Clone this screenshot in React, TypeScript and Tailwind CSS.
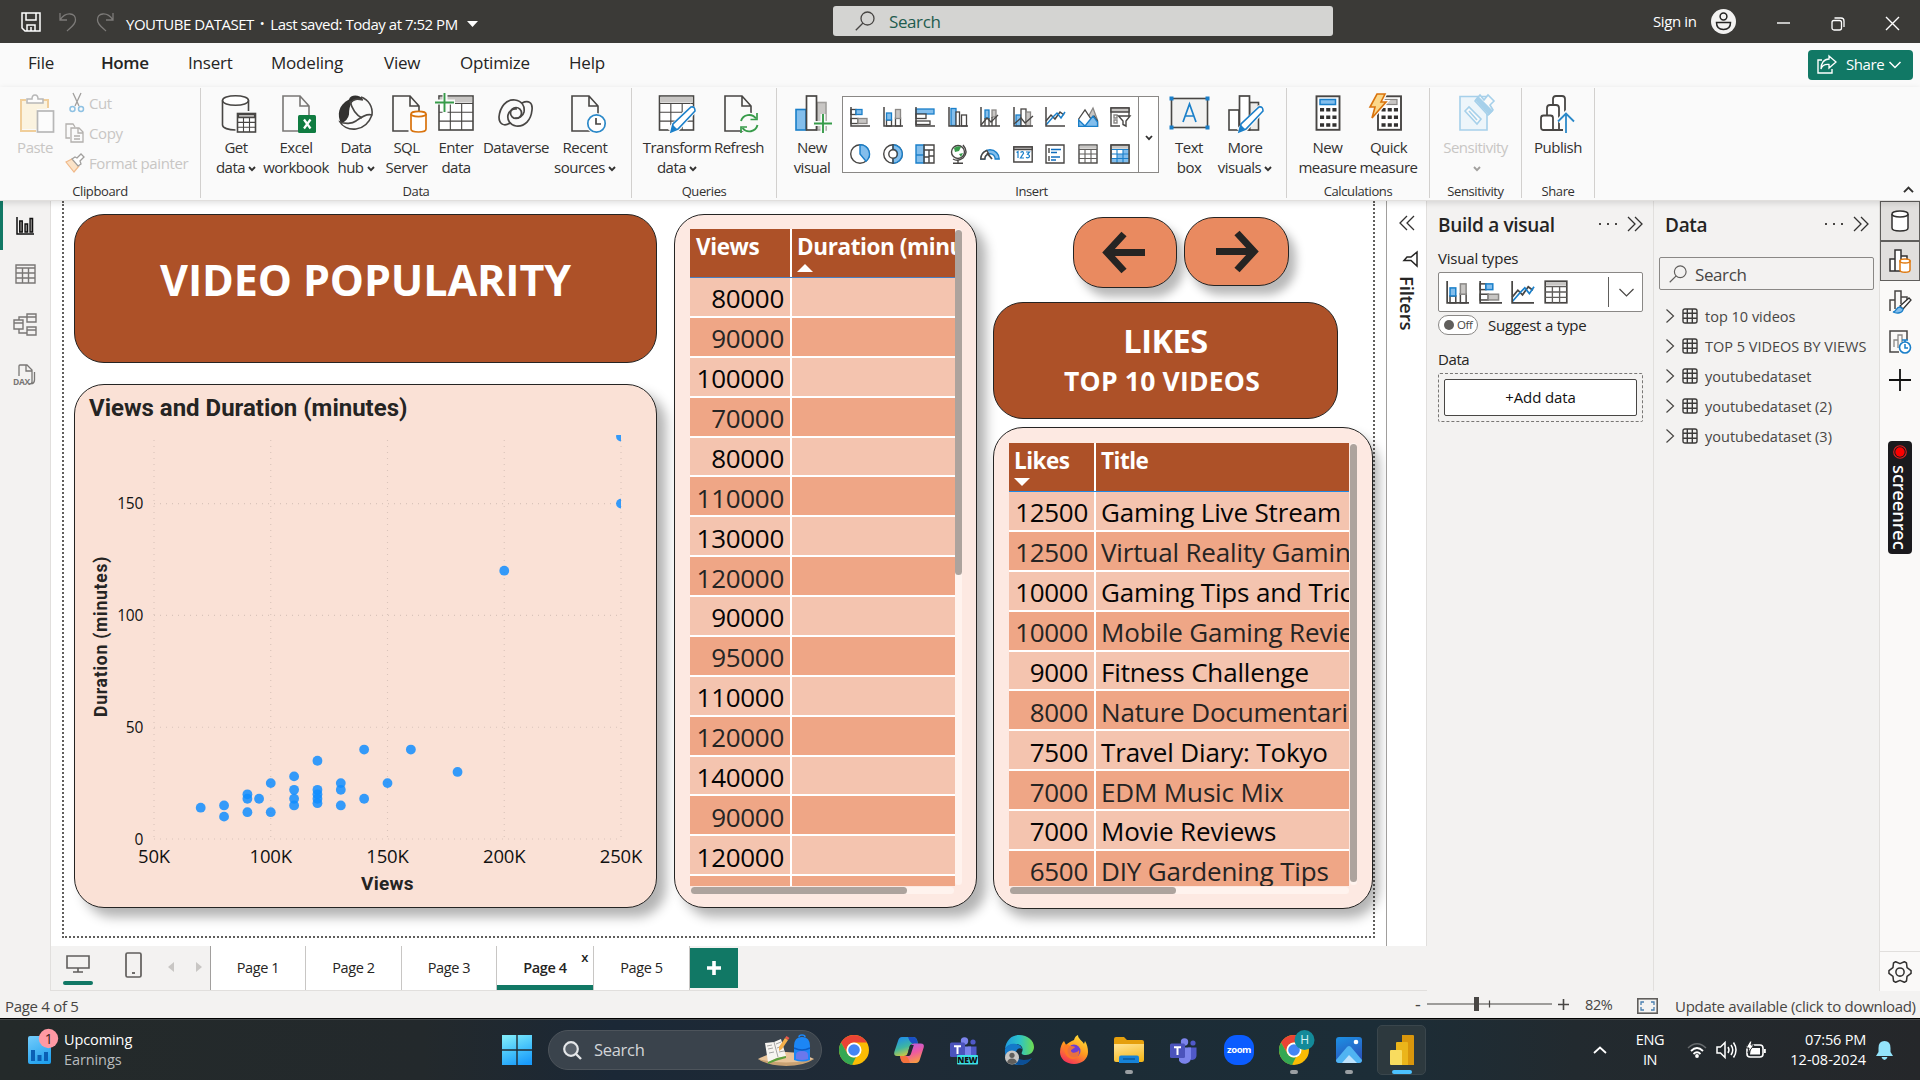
import React from "react";

const DK = "#484644";
const BL = "#1a7fc9";
const LB = "#83beec";
const GY = "#c8c6c4";

type SvgProps = { w: number; h: number; vb?: string; children: React.ReactNode; className?: string };
function Svg({ w, h, vb, children, className = "" }: SvgProps) {
  return (
    <svg width={w} height={h} viewBox={vb ?? `0 0 ${w} ${h}`} fill="none" className={`block shrink-0 overflow-visible ${className}`}>
      {children}
    </svg>
  );
}

/* ---------- ribbon icons, drawn on a 40 x 40 grid ---------- */
const Grid = ({ x, y, w, h, c = DK, head = GY }: { x: number; y: number; w: number; h: number; c?: string; head?: string }) => (
  <g>
    <rect x={x} y={y} width={w} height={h} fill="#fff" stroke={c} strokeWidth="1.6" />
    <rect x={x + 0.8} y={y + 0.8} width={w - 1.6} height={h * 0.17} fill={head} />
    <path
      d={`M${x} ${y + h * 0.22}H${x + w}M${x} ${y + h * 0.48}H${x + w}M${x} ${y + h * 0.74}H${x + w}M${x + w / 3} ${y + h * 0.22}V${y + h}M${x + (2 * w) / 3} ${y + h * 0.22}V${y + h}`}
      stroke={c}
      strokeWidth="1.1"
    />
  </g>
);
const Doc = ({ x, y, c = DK }: { x: number; y: number; c?: string }) => (
  <path d={`M${x} ${y}h17l9 10v25h-26zM${x + 17} ${y}v10h9`} fill="#fafafa" stroke={c} strokeWidth="1.6" />
);

const icons: Record<string, React.ReactNode> = {
  paste: (
    <g opacity=".5">
      <path d="M11 6H6v31h15M28 6h5v8" stroke="#e8a33d" strokeWidth="2" />
      <path d="M7 7h25v8H22v20H7z" fill="#fdeec6" />
      <path d="M12 9V5h5q0-4 3-4t3 4h5v4z" fill="#fff" stroke="#777" strokeWidth="1.5" />
      <rect x="22.500" y="17" width="16" height="21" fill="#fff" stroke="#777" strokeWidth="1.7" />
    </g>
  ),
  getdata: (
    <g stroke={DK} strokeWidth="1.6">
      <ellipse cx="19.500" cy="6.500" rx="13" ry="4.800" fill="#fff" />
      <path d="M6.500 6.500V31c0 3 6 5 13 5M32.500 6.500V17" />
      <Grid x={21.5} y={19.500} w={18} h={18.500} />
    </g>
  ),
  excel: (
    <g>
      <Doc x={7} y={2} c="#797775" />
      <rect x="22" y="21" width="18" height="18" rx="1.500" fill="#107c41" />
      <path d="M28 25.500l6.500 9M34.500 25.500L28 34.500" stroke="#fff" strokeWidth="2.200" />
    </g>
  ),
  hub: (
    <g stroke={DK} strokeWidth="1.600">
      <path d="M13 5.500C14 0 24 0 27 5.500q-8-1-11 3-3 4-3 12-1 6-8 9C1 21 2 11 13 5.500z" fill="#323130" stroke="none" />
      <path d="M25 3c8 3 12 10 11 18-3 8-8 13-16 14C12 36 6 32 4 28c5 2 12 2 16-1s10-8 16-6" />
      <path d="M14 7c2 8 6 14 12 17M15 8c4-4 8-3 12-2" />
    </g>
  ),
  sql: (
    <g>
      <Doc x={6} y={2} />
      <rect x="21.500" y="17" width="20" height="23" fill="#fafafa" />
      <path d="M24 20v15c0 2 3.500 3 7.500 3s7.500-1 7.500-3V20" fill="#fff" stroke="#d9730d" strokeWidth="1.700" />
      <ellipse cx="31.500" cy="20" rx="7.500" ry="2.600" fill="#fff" stroke="#d9730d" strokeWidth="1.700" />
    </g>
  ),
  enter: (
    <g>
      <Grid x={3} y={2} w={34} h={34} />
      <path d="M-1 8h20M9-1v20" stroke="#fafafa" strokeWidth="5" />
      <path d="M-1 8.500h19M8.500-1v19" stroke="#379b4a" strokeWidth="1.900" />
    </g>
  ),
  dataverse: (
    <g stroke={DK} strokeWidth="1.700">
      <path d="M26 9c6-3 11-1 10 7-1 10-7 17-16 16-6-1-9-6-8-11 1-4 5-7 9-6" />
      <path d="M14 29c-6 4-11 1-11-6C4 13 10 5 19 6c7 1 10 6 9 12-1 4-5 7-9 6" />
      <circle cx="20" cy="19" r="5.500" />
    </g>
  ),
  recent: (
    <g>
      <Doc x={7} y={2} />
      <circle cx="31.500" cy="29.500" r="10.500" fill="#fafafa" />
      <circle cx="31.500" cy="29.500" r="8.700" fill="#fff" stroke="#2b88c8" strokeWidth="1.700" />
      <path d="M31 24v6h5" stroke={DK} strokeWidth="1.700" />
    </g>
  ),
  transform: (
    <g>
      <Grid x={2.5} y={2} w={34} h={34} />
      <path d="M14 38L37 13" stroke="#fafafa" strokeWidth="10" />
      <path d="M14 38l2-8L34 13q4-1 4 4L21 35z" fill="#fff" stroke={BL} strokeWidth="1.600" />
      <path d="M14 38l2-7 4 4z" fill={BL} />
    </g>
  ),
  refresh: (
    <g>
      <Doc x={6} y={2} />
      <circle cx="30" cy="29" r="10.500" fill="#fafafa" />
      <path d="M22 27a8.500 8.500 0 0 1 15-2.500M38.500 31a8.500 8.500 0 0 1-15 3" stroke="#379b4a" strokeWidth="1.900" />
      <path d="M38 19v6.500h-6.500M22 39v-6h6" stroke="#379b4a" strokeWidth="1.700" />
    </g>
  ),
  newvisual: (
    <g>
      <rect x="4" y="15.500" width="10" height="20.500" fill={LB} stroke={BL} strokeWidth="1.600" />
      <rect x="25" y="8.500" width="9" height="27.500" fill={GY} stroke="#a19f9d" strokeWidth="1.600" />
      <rect x="14.500" y="2" width="10" height="34" fill="#fff" stroke={DK} strokeWidth="1.700" />
      <path d="M21 29.500h19M31 20v19" stroke="#fafafa" strokeWidth="5" />
      <path d="M22 29.500h18M31 20v19" stroke="#379b4a" strokeWidth="1.900" />
    </g>
  ),
  textbox: (
    <g>
      <rect x="2.500" y="4.500" width="36" height="29" fill="#f3f2f1" stroke={DK} strokeWidth="1.600" />
      <path d="M14 28l6.500-18L27 28M16.200 22h8.600" stroke={BL} strokeWidth="1.700" />
      <path d="M.5 2.500h4v4h-4zM36.500 2.500h4v4h-4zM.5 31.500h4v4h-4zM36.500 31.500h4v4h-4z" fill={BL} />
    </g>
  ),
  morevisuals: (
    <g>
      <rect x="4" y="16" width="10" height="20" fill="#fff" stroke={DK} strokeWidth="1.600" />
      <rect x="24.500" y="8.500" width="9" height="27.500" fill="#edebe9" stroke={DK} strokeWidth="1.600" />
      <rect x="14.500" y="2" width="10" height="34" fill="#fff" stroke={DK} strokeWidth="1.700" />
      <path d="M15 38L37 14" stroke="#fafafa" strokeWidth="9" />
      <path d="M14 38l2-8L34 13q4-1 4 4L21 35z" fill="#fff" stroke={BL} strokeWidth="1.600" />
      <path d="M14 38l2-7 4 4z" fill={BL} />
    </g>
  ),
  newmeasure: (
    <g>
      <rect x="8.500" y="2.300" width="23" height="33.500" fill="#fff" stroke={DK} strokeWidth="1.900" />
      <rect x="12" y="5.500" width="15.500" height="5" fill={LB} stroke={BL} strokeWidth="1.500" />
      <path d="M12 15.800h16.500M12 23.300h16.500M12 31h16.500" stroke="#323130" strokeWidth="3.600" strokeDasharray="4.100 2.100" />
    </g>
  ),
  quick: (
    <g>
      <rect x="9" y="2.300" width="23" height="33.500" fill="#fff" stroke={DK} strokeWidth="1.900" />
      <rect x="16" y="5.500" width="12" height="5" fill={GY} stroke="#8a8886" strokeWidth="1.200" />
      <path d="M12.500 15.800H29M12.500 23.300H29M12.500 31H29" stroke="#323130" strokeWidth="3.600" strokeDasharray="4.100 2.100" />
      <path d="M8 0h8l-4 8h5L3 24l3-11H0z" fill="#fcd88a" stroke="#fafafa" strokeWidth="4" />
      <path d="M8 0h8l-4 8h5L3 24l3-11H1z" fill="#fcd88a" stroke="#d9730d" strokeWidth="1.600" />
    </g>
  ),
  sensitivity: (
    <g stroke="#a6d0ea" strokeWidth="1.600">
      <path d="M4 2.500h27V36H4z" fill="#edf5fa" />
      <path d="M9 17l4-4 12 12-4 5z" fill="#fafafa" />
      <path d="M13 17l8 9" />
      <path d="M19 7l5-6 4 5 4-5 6 6-4 4 3 5-5 5z" fill="#fafafa" />
      <path d="M20 6l13 14 3-3L22 3z" fill="#a6d0ea" />
    </g>
  ),
  publish: (
    <g stroke={DK} strokeWidth="1.800">
      <path d="M15 12V5q0-3 3-3h6q3 0 3 3v13" fill="#fff" />
      <path d="M9 22v-8q0-3 3-3h6q3 0 3 3v22" fill="#fff" />
      <path d="M3 33V24q0-2.500 2.500-2.500h7Q15 21.500 15 24v12H5q-2 0-2-3zM15 36h10" fill="#fff" />
      <path d="M28 39V20M20 27.500l8-8 8 8" stroke="#fafafa" strokeWidth="5" />
      <path d="M28 39V20M20 27.500l8-8 8 8" stroke="#2b88c8" />
    </g>
  ),
};

const Caret = ({ c = "#323130" }: { c?: string }) => (
  <svg width="8" height="6" viewBox="0 0 8 6" className="mt-[3px] ml-[3px] inline-block" fill="none">
    <path d="M1 1l3 3.200L7 1" stroke={c} strokeWidth="1.900" />
  </svg>
);

function Item({ icon, a, b, caret, w, dim }: { icon: string; a: string; b?: string; caret?: boolean; w: string; dim?: boolean }) {
  return (
    <div className={`flex shrink-0 flex-col items-center pt-[7px] ${w} ${dim ? "text-[#c8c6c4]" : "text-[#323130]"}`}>
      <Svg w={40} h={40}>{icons[icon]}</Svg>
      <div className="mt-[3px] flex flex-col items-center text-[15px] leading-5 tracking-[-0.5px] whitespace-nowrap">
        <span>{a}</span>
        <span className="flex h-5 items-center">
          {b}
          {caret && <Caret c={dim ? "#a19f9d" : "#323130"} />}
        </span>
      </div>
    </div>
  );
}

function Group({ label, w, children }: { label: string; w: string; children: React.ReactNode }) {
  return (
    <div className={`flex shrink-0 flex-col ${w}`}>
      <div className="flex h-[96px]">{children}</div>
      <div className="flex h-[18px] items-center justify-center pt-[2px] text-[13px] text-[#323130]">{label}</div>
    </div>
  );
}
const Sep = () => <div className="mt-px h-[110px] w-px shrink-0 bg-[#d2d0ce]" />;

/* ---------- small chart icons, drawn on a 20 x 20 grid ---------- */
const Ax = () => <path d="M1 0v19h19" stroke={DK} strokeWidth="1.500" />;
const mini: Record<string, React.ReactNode> = {
  sbar: (<g strokeWidth="1.300"><rect x="1" y="2.500" width="5" height="5" fill="#fff" stroke={DK} /><rect x="6" y="2.500" width="6" height="5" fill={LB} stroke={BL} /><rect x="1" y="11.500" width="7" height="5" fill="#fff" stroke={DK} /><rect x="8" y="11.500" width="9" height="5" fill={GY} stroke="#8a8886" /><Ax /></g>),
  scol: (<g strokeWidth="1.300"><rect x="3.500" y="13" width="5" height="6" fill="#fff" stroke={DK} /><rect x="3.500" y="6" width="5" height="7" fill={LB} stroke={BL} /><rect x="12.500" y="11" width="5" height="8" fill="#fff" stroke={DK} /><rect x="12.500" y="2.500" width="5" height="9" fill={GY} stroke="#8a8886" /><Ax /></g>),
  cbar: (<g strokeWidth="1.300"><rect x="1" y="2" width="18" height="5" fill={LB} stroke={BL} /><rect x="1" y="7" width="10" height="4.500" fill="#fff" stroke={DK} /><rect x="1" y="14" width="14" height="3.500" fill="#fff" stroke={DK} /><Ax /></g>),
  ccol: (<g strokeWidth="1.300"><rect x="3" y="1.500" width="5" height="17" fill={LB} stroke={BL} /><rect x="8" y="5" width="3.500" height="14" fill="#fff" stroke={DK} /><rect x="13.500" y="8" width="5" height="11" fill="#fff" stroke={DK} /><Ax /></g>),
  linescol: (<g strokeWidth="1.300"><rect x="5" y="3" width="4" height="8" fill={LB} stroke={BL} /><rect x="12" y="3" width="4" height="7" fill={GY} stroke="#8a8886" /><path d="M5 11v8M9 11v8M12 10v9M16 10v9" stroke={DK} /><path d="M1 18l6-7 4 4 7-7" stroke={DK} /><Ax /></g>),
  linecol: (<g strokeWidth="1.300"><rect x="3" y="8" width="5" height="11" fill={LB} stroke={BL} /><rect x="8" y="2" width="5" height="17" fill="#fff" stroke={DK} /><rect x="13" y="5" width="4.500" height="14" fill={GY} stroke="#8a8886" /><path d="M1 17l7-6 4 5 8-7" stroke={DK} /><Ax /></g>),
  line: (<g strokeWidth="1.500"><path d="M1 14l5-6 4 4 5-7 4 3" stroke={DK} /><path d="M1 18l7-8 4-4 4 5 4-6" stroke={BL} /><Ax /></g>),
  area: (<g strokeWidth="1.300"><path d="M8 14L15 1l4.500 12v6H8z" fill={GY} stroke="#8a8886" /><path d="M.7 12L7 3l6 9 3-3 3.500 5v5.300H.7z" fill="#fff" stroke={DK} /><path d="M.7 19.300V13L7 19l4-5 4-5 4.500 6v4.300z" fill={LB} stroke={BL} /></g>),
  slicer: (<g strokeWidth="1.400"><path d="M10 19H1V1h18v8" stroke={DK} /><path d="M1 1h18v4H1z" fill={GY} stroke={DK} /><path d="M4 8h3v3H4zM4 13h3v3H4z" stroke="#8a8886" /><path d="M8.500 9H20l-4 5v5l-3-1.500V14z" fill="#fff" stroke={DK} /></g>),
  pie: (<g strokeWidth="1.400"><circle cx="10" cy="10" r="9.300" fill="#fff" stroke={DK} /><path d="M10 .7a9.300 9.300 0 0 1 6 16.500L10 10z" fill={LB} stroke={BL} /></g>),
  donut: (<g strokeWidth="1.400"><circle cx="10" cy="10" r="9.300" stroke={DK} fill="#fff" /><path d="M10 .7a9.300 9.300 0 0 1 0 18.600v-5a4.500 4.500 0 0 0 0-9z" fill={LB} stroke={BL} /><circle cx="10" cy="10" r="4.200" stroke={DK} fill="#fff" /><path d="M10 0v5M10 15v5" stroke={DK} /></g>),
  tree: (<g strokeWidth="1.400"><path d="M1 1h8v18H1z" fill={LB} stroke={BL} /><path d="M1 11h8" stroke={BL} /><path d="M9 1h10v18H9zM9 6h10M14 6v13M14 12h5M9 13h5" fill="none" stroke={DK} /></g>),
  map: (<g strokeWidth="1.400"><circle cx="10" cy="8" r="6.500" fill="#fff" stroke={DK} /><path d="M6 4q4-3 7-1l-2 4-4 1zM11 10l4-1-2 4z" fill="#379b4a" /><path d="M15 1q6 7 0 13-5 4-10 1M10 16v3M5 19.300h10" stroke={DK} /></g>),
  gauge: (<g strokeWidth="1.400"><path d="M.8 15a9.200 9.200 0 0 1 18.400 0h-4a5.200 5.200 0 0 0-10.400 0z" fill={LB} stroke={BL} /><path d="M.8 15a9.200 9.200 0 0 1 6-8.500l2 3.500a5 5 0 0 0-4 5z" fill="#fff" stroke={DK} /><path d="M7 9l5 6" stroke={DK} strokeWidth="1.800" /></g>),
  card: (<g strokeWidth="1.400"><path d="M.8 3h18.400v15H.8z" fill="#fff" stroke={DK} /><path d="M.8 3h18.400v2.500H.8z" fill={GY} stroke={DK} /><path d="M3.500 8.500L5 7.500V14M7.500 8.500q2.800-2.200 3 .8L7.500 14h3.500M13 8h3.500L14.500 10.300q3 1 1.500 3-1.500 1-3 0" stroke={BL} strokeWidth="1.200" /></g>),
  multi: (<g strokeWidth="1.400"><path d="M1 1h18v18H1z" fill="#fff" stroke={DK} /><path d="M4 4v5M4 12v5" stroke={DK} /><path d="M6 5.500h10M6 8.500h6M6 13h9M6 16h5" stroke="#0f6cbd" strokeWidth="1.700" /></g>),
  table: (<g><rect x="1" y="1" width="18" height="18" fill="#fff" stroke={DK} strokeWidth="1.400" /><rect x="1.700" y="1.700" width="16.600" height="3" fill={GY} /><path d="M1 5.500h18M1 10h18M1 14.500h18M7 5.500V19M13 5.500V19" stroke="#605e5c" strokeWidth="1.100" /></g>),
  matrix: (<g><rect x="1" y="1" width="18" height="18" fill="#fff" stroke={DK} strokeWidth="1.400" /><path d="M13 5.500h6V19H7v-4.500h6z" fill={LB} /><path d="M1 14.500h6V19H1zM7 10h6v4.500H7z" fill={LB} /><rect x="1.700" y="1.700" width="16.600" height="3" fill={GY} /><path d="M1 5.500h18M1 10h18M1 14.500h18M7 5.500V19M13 5.500V19" stroke={BL} strokeWidth="1.100" /><rect x="1" y="1" width="18" height="18" stroke={DK} strokeWidth="1.400" /></g>),
};
const Mini = ({ n, s = 20 }: { n: string; s?: number }) => (<Svg w={s} h={s} vb="0 0 20 20">{mini[n]}</Svg>);

const Magnifier = ({ s = 20, c = DK }: { s?: number; c?: string }) => (
  <Svg w={s} h={s} vb="0 0 20 20">
    <circle cx="12.500" cy="7.500" r="6.500" stroke={c} strokeWidth="1.300" />
    <path d="M8 12L.8 19.200" stroke={c} strokeWidth="1.300" />
  </Svg>
);

function TitleBar() {
  return (
    <header className="flex h-[43px] shrink-0 items-center bg-[#3b3a37] text-white">
      <div className="flex w-[126px] items-center pl-[21px]">
        <Svg w={20} h={20}>
          <path d="M1 1h18v18H4l-3-3zM5 1v7h10V1M6 19v-6h8v6M10 15v4" stroke="#fff" strokeWidth="1.500" />
        </Svg>
        <Svg w={18} h={18} className="ml-[18px]">
          <path d="M1 0v7h7M1 7C7-2 17 0 16.500 7c0 4-3 6-8.500 11" stroke="#7d7b79" strokeWidth="1.300" />
        </Svg>
        <Svg w={18} h={18} className="ml-[19px]">
          <path d="M17 0v7h-7M17 7C11-2 1 0 1.500 7c0 4 3 6 8.500 11" stroke="#7d7b79" strokeWidth="1.300" />
        </Svg>
      </div>
      <div className="flex w-[707px] items-center pt-[5px] text-[15px] tracking-[-0.48px] whitespace-nowrap">
        <span>YOUTUBE DATASET</span>
        <span className="mx-[6px] text-[13px]">•</span>
        <span>Last saved: Today at 7:52 PM</span>
        <Svg w={11} h={6} className="ml-[9px]"><path d="M0 0h11L5.500 6z" fill="#fff" /></Svg>
      </div>
      <div className="mb-px flex h-[30px] w-[500px] items-center rounded-[3px] bg-[#d4d4d2] pl-[22px]">
        <Magnifier />
        <span className="ml-[14px] pt-px text-[17px] text-[#1f5c4e]">Search</span>
      </div>
      <div className="ml-[320px] w-[58px] text-[15px] whitespace-nowrap">Sign in</div>
      <Svg w={25} h={25}>
        <circle cx="12.500" cy="12.500" r="12.500" fill="#f3f2f1" />
        <circle cx="12.500" cy="7.500" r="3.400" stroke="#252423" strokeWidth="1.500" />
        <path d="M5.500 13.500h14c0 5-3 7-7 7s-7-2-7-7z" stroke="#252423" strokeWidth="1.500" />
      </Svg>
      <Svg w={13} h={2} className="mt-[2px] ml-[41px]"><path d="M0 1h13" stroke="#fff" strokeWidth="1.400" /></Svg>
      <Svg w={14} h={14} className="mt-[4px] ml-[41px]">
        <rect x="1" y="3.500" width="9.500" height="9.500" rx="2" stroke="#fff" strokeWidth="1.300" />
        <path d="M3.500 1h6.500q3 0 3 3v6" stroke="#fff" strokeWidth="1.300" />
      </Svg>
      <Svg w={13} h={13} className="mt-[4px] ml-[41px]"><path d="M0 0l13 13M13 0L0 13" stroke="#fff" strokeWidth="1.400" /></Svg>
    </header>
  );
}

function MenuTabs() {
  return (
    <nav className="flex h-[44px] shrink-0 items-center pb-[5px] text-[17px] tracking-[-0.2px] text-[#252423]">
      <span className="ml-[28px] w-[73px]">File</span>
      <span className="w-[87px] font-semibold tracking-[-0.4px]">Home</span>
      <span className="w-[83px]">Insert</span>
      <span className="w-[113px]">Modeling</span>
      <span className="w-[76px]">View</span>
      <span className="w-[109px]">Optimize</span>
      <span className="flex-1">Help</span>
      <div className="mt-[4px] mr-[7px] flex h-[30px] w-[105px] items-center rounded-[4px] bg-[#117865] pl-[9px] text-[15px] tracking-[-0.4px] text-white">
        <Svg w={20} h={19}>
          <path d="M5 5H1v13h14v-4" stroke="#fff" strokeWidth="1.400" />
          <path d="M12 1l7 6-7 6V9.500C8 9 5 11 4 14c0-6 3-10 8-10z" stroke="#fff" strokeWidth="1.300" />
        </Svg>
        <span className="ml-[9px]">Share</span>
        <Svg w={12} h={8} className="ml-[5px]"><path d="M.5 1L6 6.500 11.500 1" stroke="#fff" strokeWidth="1.500" /></Svg>
      </div>
    </nav>
  );
}

const row1 = ["sbar", "scol", "cbar", "ccol", "linescol", "linecol", "line", "area", "slicer"];
const row2 = ["pie", "donut", "tree", "map", "gauge", "card", "multi", "table", "matrix"];

function Ribbon() {
  return (
    <div className="relative z-10 flex h-[114px] shrink-0 border-b border-[#e1dfdd] bg-[#fafafa] shadow-[0_2px_6px_rgba(0,0,0,0.13)]">
      <Group label="Clipboard" w="w-[200px]">
        <Item icon="paste" a="Paste" w="w-[70px]" dim />
        <div className="flex flex-col text-[15px] whitespace-nowrap text-[#c8c6c4]">
          <div className="mt-px -ml-px flex h-[30px] items-center">
            <Svg w={16} h={20}>
              <path d="M4 0l6 13M12 0L6 13" stroke="#a19f9d" strokeWidth="1.300" />
              <circle cx="3.500" cy="16" r="2.500" stroke="#8ec1e3" strokeWidth="1.500" /><circle cx="12" cy="16" r="2.500" stroke="#8ec1e3" strokeWidth="1.500" />
            </Svg>
            <span className="ml-[4px]">Cut</span>
          </div>
          <div className="-ml-[5px] flex h-[30px] items-center">
            <Svg w={19} h={20}>
              <path d="M5 15H1V1h7l2 3M6 5h8l4 4v10H6zM13 5v5h5M9 13h6M9 16h6" stroke="#b3b0ad" strokeWidth="1.300" />
            </Svg>
            <span className="ml-[5px]">Copy</span>
          </div>
          <div className="-ml-[5px] flex h-[30px] items-center">
            <Svg w={19} h={19}>
              <path d="M1 8l6-3 7 7-5 6z" fill="#fbe3c8" stroke="#f0b98a" strokeWidth="1.200" />
              <path d="M7 5l3-2 2 1 4-4 3 3-4 4 1 3-3 2z" fill="#fff" stroke="#a19f9d" strokeWidth="1.300" />
            </Svg>
            <span className="ml-[5px]">Format painter</span>
          </div>
        </div>
      </Group>
      <Sep />
      <Group label="Data" w="w-[430px]">
        <div className="w-[5px]" />
        <Item icon="getdata" a="Get" b="data" caret w="w-[60px]" />
        <Item icon="excel" a="Excel" b="workbook" w="w-[60px]" />
        <Item icon="hub" a="Data" b="hub" caret w="w-[60px]" />
        <Item icon="sql" a="SQL" b="Server" w="w-[41px]" />
        <Item icon="enter" a="Enter" b="data" w="w-[58px]" />
        <Item icon="dataverse" a="Dataverse" w="w-[62px]" />
        <Item icon="recent" a="Recent" b="sources" caret w="w-[76px]" />
      </Group>
      <Sep />
      <Group label="Queries" w="w-[144px]">
        <div className="w-[5px]" />
        <Item icon="transform" a="Transform" b="data" caret w="w-[80px]" />
        <Item icon="refresh" a="Refresh" w="w-[44px]" />
      </Group>
      <Sep />
      <Group label="Insert" w="w-[509px]">
        <div className="w-[5px]" />
        <Item icon="newvisual" a="New" b="visual" w="w-[60px]" />
        <div className="mt-[9px] flex h-[77px] w-[317px] shrink-0 border border-[#8a8886] bg-white">
          <div className="flex w-[296px] flex-col justify-center gap-[17px] pt-px pl-[7px]">
            {[row1, row2].map((r, i) => (
              <div key={i} className="flex gap-[12.500px]">
                {r.map((n) => (<Mini key={n} n={n} />))}
              </div>
            ))}
          </div>
          <div className="-ml-px flex flex-1 items-center justify-center border-l border-[#8a8886] pt-[6px]">
            <Svg w={8} h={6}><path d="M1 1l3 3.200L7 1" stroke="#323130" strokeWidth="1.800" /></Svg>
          </div>
        </div>
        <Item icon="textbox" a="Text" b="box" w="w-[60px]" />
        <Item icon="morevisuals" a="More" b="visuals" caret w="w-[52px]" />
      </Group>
      <Sep />
      <Group label="Calculations" w="w-[142px]">
        <div className="w-[10px]" />
        <Item icon="newmeasure" a="New" b="measure" w="w-[61px]" />
        <Item icon="quick" a="Quick" b="measure" w="w-[61px]" />
      </Group>
      <Sep />
      <Group label="Sensitivity" w="w-[91px]">
        <Item icon="sensitivity" a="Sensitivity" b="" caret w="w-[91px]" dim />
      </Group>
      <Sep />
      <Group label="Share" w="w-[72px]">
        <Item icon="publish" a="Publish" w="w-[72px]" />
      </Group>
      <Sep />
      <div className="flex flex-1 items-end justify-end pr-[6px] pb-[7px]">
        <Svg w={11} h={7}><path d="M1 6.200L5.500 1.500 10 6.200" stroke="#323130" strokeWidth="1.900" /></Svg>
      </div>
    </div>
  );
}

function LeftRail() {
  return (
    <aside className="flex w-[51px] shrink-0 flex-col items-center border-r border-[#e1dfdd] bg-[#f3f2f1]">
      <div className="flex h-[49px] w-full items-center justify-center border-l-[3px] border-[#117865] pr-[4px]">
        <Svg w={18} h={18}>
          <path d="M1 0v17h17" stroke="#111" strokeWidth="1.500" />
          <path d="M3.700 4h2.600v11H3.700zM9 7h2.600v8H9zM14 1.500h2.600V15H14z" fill="#8a8886" stroke="#111" strokeWidth="1.300" />
        </Svg>
      </div>
      <Svg w={21} h={20} className="mt-[14px]">
        <path d="M1 1h19v18H1zM1 4h19M1 9h19M1 14h19M7.500 4v15M13.500 4v15" stroke="#797775" strokeWidth="1.400" />
      </Svg>
      <Svg w={24} h={24} className="mt-[29px]">
        <path d="M1 7h9v9H1zM1 10h9M14 1h9v8h-9zM14 4h9M14 14h9v8h-9zM14 17h9M6 7V4h8M6 16v4h8" stroke="#797775" strokeWidth="1.400" />
      </Svg>
      <Svg w={24} h={22} className="mt-[27px]">
        <path d="M6 12V2q0-1 1-1h7l5 5v12q0 2-3 2M13 1v6h6M21.500 8v8q0 3-3 4" stroke="#797775" strokeWidth="1.300" />
        <text x="0" y="21" fontSize="8.500" fontWeight="700" fontFamily="Open Sans, sans-serif" letterSpacing="-0.3" fill="#797775">DAX</text>
      </Svg>
    </aside>
  );
}

const points: [number, number][] = [
  [70, 14], [80, 15], [80, 10], [90, 20], [90, 18], [90, 12], [95, 18], [100, 25], [100, 12], [110, 28], [110, 22], [110, 18], [110, 15],
  [120, 35], [120, 22], [120, 20], [120, 18], [120, 16], [130, 25], [130, 22], [130, 15], [140, 40], [140, 18], [150, 25], [160, 40],
  [180, 30], [200, 120], [250, 150], [250, 180],
];
const px = (k: number) => 79 + ((k - 50) / 200) * 467;
const py = (m: number) => 454 - m * 2.236;

function ScatterCard() {
  return (
    <section className="mt-[21px] h-[524px] rounded-[30px] border border-[#252423] bg-[#fae1d6] shadow-[9px_9px_12px_rgba(0,0,0,0.3)]">
      <svg width="581" height="522" viewBox="0 0 581 522" className="block" fontFamily="Open Sans, sans-serif" fill="#111">
        <defs><clipPath id="plot"><rect x="77" y="50" width="469" height="410" /></clipPath></defs>
        <text x="14" y="31" fontFamily="Roboto, sans-serif" fontWeight="700" fontSize="24" textLength="318" fill="#252423">Views and Duration (minutes)</text>
        <g stroke="#d9c4ba" strokeWidth="1.100" strokeDasharray="1 5">
          {[0, 50, 100, 150].map((v) => (<path key={v} d={`M79 ${py(v)}H546`} />))}
          {[50, 100, 150, 200, 250].map((v) => (<path key={v} d={`M${px(v)} 55V454`} />))}
        </g>
        {[0, 50, 100, 150].map((v) => (<text key={v} x="68" y={py(v) + 5.500} fontSize="15.500" letterSpacing="-0.3" textAnchor="end">{v}</text>))}
        {[50, 100, 150, 200, 250].map((v) => (<text key={v} x={px(v)} y="478" fontSize="18.500" letterSpacing="-0.2" textAnchor="middle">{v}K</text>))}
        <g clipPath="url(#plot)" fill="#118dff" fillOpacity=".85">
          {points.map(([k, m], i) => (<circle key={i} cx={px(k)} cy={py(m)} r="4.900" />))}
        </g>
        <text x="312" y="505" fontFamily="Roboto, sans-serif" fontWeight="700" fontSize="19" textLength="52" textAnchor="middle" fill="#252423">Views</text>
        <text transform="translate(32 252) rotate(-90)" fontFamily="Roboto, sans-serif" fontWeight="700" fontSize="17.500" textLength="160" textAnchor="middle" fill="#252423">Duration (minutes)</text>
      </svg>
    </section>
  );
}

const views = [80000, 90000, 100000, 70000, 80000, 110000, 130000, 120000, 90000, 95000, 110000, 120000, 140000, 90000, 120000];
const likes: [number, string][] = [
  [12500, "Gaming Live Stream"], [12500, "Virtual Reality Gaming"], [10000, "Gaming Tips and Tricks"], [10000, "Mobile Gaming Reviews"],
  [9000, "Fitness Challenge"], [8000, "Nature Documentaries"], [7500, "Travel Diary: Tokyo"], [7000, "EDM Music Mix"], [7000, "Movie Reviews"], [6500, "DIY Gardening Tips"],
];

function Cell({ alt, children, className = "" }: { alt: boolean; children?: React.ReactNode; className?: string }) {
  return (
    <div className={`flex h-[39.880px] shrink-0 items-center overflow-hidden border-b-2 border-white pt-[4px] text-[26px] whitespace-nowrap ${alt ? "bg-[#efa686] text-[#252423]" : "bg-[#f4c4af] text-[#050505]"} ${className}`}>
      {children}
    </div>
  );
}

function ViewsTable() {
  return (
    <section className="h-[694px] w-[303px] rounded-[30px] border border-[#252423] bg-[#fde9e2] pt-[14px] pl-[15px] shadow-[9px_9px_12px_rgba(0,0,0,0.3)]">
      <div className="flex">
        <div className="h-[657px] w-[265px] overflow-hidden">
          <div className="flex h-[49px] w-full gap-[2px] border-b border-[#4a7fc0] bg-white text-[22.500px] leading-[30px] font-bold tracking-[-0.4px] text-white">
            <div className="w-[100px] bg-[#ad5128] pt-[3px] pl-[6px]">Views</div>
            <div className="flex-1 overflow-hidden bg-[#ad5128] pt-[3px] pl-[5px] whitespace-nowrap">
              Duration (minutes)
              <Svg w={16} h={8} className="mt-[2px]"><path d="M0 8h16L8 0z" fill="#fff" /></Svg>
            </div>
          </div>
          {[...views, null].map((v, i) => (
            <div key={i} className="flex gap-[2px] bg-white">
              <Cell alt={i % 2 === 1} className="w-[100px] justify-end pr-[6px] tracking-[-0.3px]">{v}</Cell>
              <Cell alt={i % 2 === 1} className="flex-1" />
            </div>
          ))}
        </div>
        <div className="h-[656px] w-[7px] rounded-full bg-[#fff3ee]"><div className="mt-px h-[345px] rounded-full bg-[#ada39d]" /></div>
      </div>
      <div className="mt-px ml-px h-[7px] w-[263px] rounded-full bg-[#fff3ee]"><div className="h-full w-[216px] rounded-full bg-[#ada39d]" /></div>
    </section>
  );
}

function LikesTable() {
  return (
    <section className="mt-[8px] h-[482px] w-[380px] rounded-[30px] border border-[#252423] bg-[#fde9e2] pt-[15px] pl-[15px] shadow-[6px_9px_12px_rgba(0,0,0,0.3)]">
      <div className="flex">
        <div className="h-[443px] w-[340px] overflow-hidden">
          <div className="flex h-[49px] w-full gap-[2px] border-b border-[#1e8ae6] bg-white text-[22.500px] leading-[30px] font-bold tracking-[-0.5px] text-white">
            <div className="w-[85px] bg-[#ad5128] pt-[3px] pl-[5px]">
              Likes
              <Svg w={16} h={8} className="mt-[2px]"><path d="M0 0h16L8 8z" fill="#fff" /></Svg>
            </div>
            <div className="flex-1 bg-[#ad5128] pt-[3px] pl-[5px]">Title</div>
          </div>
          {likes.map(([n, t], i) => (
            <div key={i} className="flex gap-[2px] bg-white">
              <Cell alt={i % 2 === 1} className="w-[85px] justify-end pr-[6px] tracking-[-0.3px]">{n}</Cell>
              <Cell alt={i % 2 === 1} className="flex-1 pl-[5px] tracking-[-0.15px]">{t}</Cell>
            </div>
          ))}
        </div>
        <div className="ml-px h-[442px] w-[7px] rounded-full bg-[#fff3ee]"><div className="mt-px h-[438px] rounded-full bg-[#ada39d]" /></div>
      </div>
      <div className="mt-px ml-px h-[7px] w-[339px] rounded-full bg-[#fff3ee]"><div className="h-full w-[166px] rounded-full bg-[#ada39d]" /></div>
    </section>
  );
}

function NavButton({ flip, h, w }: { flip?: boolean; h: string; w: string }) {
  return (
    <div className={`flex items-center justify-center rounded-[30px] border border-[#252423] bg-[#e98a60] shadow-[7px_9px_10px_rgba(0,0,0,0.28)] ${h} ${w}`}>
      <Svg w={42} h={44} className={flip ? "-scale-x-100" : "-ml-[2px]"}>
        <path d="M42 21.500H5M21 3L4 21.500 21 40" stroke="#252423" strokeWidth="7" />
      </Svg>
    </div>
  );
}

function Canvas() {
  return (
    <main className="flex w-[1335px] shrink-0 bg-white pl-[11px]">
      <div className="flex h-[737px] w-[1313px] border-r-2 border-b-2 border-l-2 border-dotted border-[#605e5c] pt-[13px] pl-[10px]">
        <div className="flex w-[583px] flex-col">
          <section className="flex h-[149px] items-center justify-center rounded-[30px] border border-[#252423] bg-[#ad5128] pb-[17px] text-[43px] font-bold tracking-[-0.1px] whitespace-nowrap text-white">
            VIDEO POPULARITY
          </section>
          <ScatterCard />
        </div>
        <div className="ml-[17px]"><ViewsTable /></div>
        <div className="ml-[16px] flex flex-col">
          <div className="mt-[3px] flex pl-[80px]">
            <NavButton w="w-[104px]" h="h-[71px]" />
            <div className="w-[7px]" />
            <NavButton flip w="w-[105px]" h="h-[69px]" />
          </div>
          <section className="mt-[14px] flex h-[117px] w-[345px] flex-col items-center rounded-[30px] border border-[#252423] bg-[#ad5128] pt-[17px] font-bold whitespace-nowrap text-white">
            <div className="h-[42px] text-[32.500px] leading-[42px] tracking-[-0.5px]">LIKES</div>
            <div className="mr-[7px] h-[38px] text-[26.500px] leading-[38px] tracking-[0.200px]">TOP 10 VIDEOS</div>
          </section>
          <LikesTable />
        </div>
      </div>
    </main>
  );
}

const DblChevron = ({ flip, c = "#323130" }: { flip?: boolean; c?: string }) => (
  <Svg w={16} h={16} className={flip ? "" : "-scale-x-100"}>
    <path d="M1 1l7 7-7 7M8 1l7 7-7 7" stroke={c} strokeWidth="1.300" />
  </Svg>
);
const Dots = () => (<Svg w={18} h={3}><path d="M0 0h2v2H0zM8 0h2v2H8zM16 0h2v2h-2z" fill="#484644" /></Svg>);

function FiltersPane() {
  return (
    <div className="flex w-[41px] shrink-0 flex-col items-center border-r border-l border-r-[#e1dfdd] border-l-[#a19f9d] bg-white">
      <div className="mt-[14px]"><DblChevron /></div>
      <Svg w={15} h={16} className="mt-[20px] ml-[8px]">
        <path d="M14 1v14L8 9.500H1L4 6h4z" stroke="#252423" strokeWidth="1.500" />
      </Svg>
      <div className="mt-[9px] text-[18.500px] leading-[24px] font-semibold tracking-[-0.100px] text-[#252423] [writing-mode:vertical-rl]">Filters</div>
    </div>
  );
}

function BuildPane() {
  return (
    <aside className="w-[227px] shrink-0 border-r border-[#e1dfdd] bg-[#f3f2f1] pl-[11px] text-[#252423]">
      <div className="flex h-[46px] items-center">
        <span className="w-[161px] pt-[3px] text-[19px] font-semibold tracking-[-0.3px]">Build a visual</span>
        <Dots />
        <div className="ml-[10px]"><DblChevron flip /></div>
      </div>
      <div className="flex h-[25px] items-center pb-[2px] text-[15px] tracking-[-0.2px]">Visual types</div>
      <div className="flex h-[40px] w-[205px] items-center rounded-[2px] border border-[#8a8886] bg-white pl-[7px]">
        <Mini n="scol" s={23} /><div className="w-[10px]" />
        <Mini n="sbar" s={23} /><div className="w-[9px]" />
        <Mini n="line" s={23} /><div className="w-[10px]" />
        <Mini n="table" s={24} />
        <div className="ml-[40px] h-[30px] w-px bg-[#605e5c]" />
        <Svg w={15} h={9} className="ml-[10px]"><path d="M.5 1l7 7 7-7" stroke="#484644" strokeWidth="1.200" /></Svg>
      </div>
      <div className="mt-[3px] flex h-[20px] items-center">
        <div className="flex h-[20px] w-[40px] items-center rounded-full border border-[#8a8886] bg-white pl-[5px]">
          <div className="size-[10px] rounded-full bg-[#605e5c]" />
          <span className="ml-[3px] text-[11.500px] text-[#484644]">Off</span>
        </div>
        <span className="ml-[10px] pt-px text-[15px] tracking-[-0.2px]">Suggest a type</span>
      </div>
      <div className="mt-[12px] flex h-[24px] items-center text-[15px]">Data</div>
      <div className="mt-[2px] flex h-[49px] w-[205px] items-center justify-center rounded-[2px] border border-dashed border-[#797775]">
        <div className="flex h-[37px] w-[193px] items-center justify-center rounded-[2px] border border-[#484644] bg-white text-[15px] font-medium tracking-[-0.1px] text-[#111]">+Add data</div>
      </div>
    </aside>
  );
}

const tables = ["top 10 videos", "TOP 5 VIDEOS BY VIEWS", "youtubedataset", "youtubedataset (2)", "youtubedataset (3)"];

function DataPane() {
  return (
    <aside className="w-[226px] shrink-0 border-r border-[#e1dfdd] bg-[#f3f2f1] text-[#252423]">
      <div className="flex h-[46px] items-center pl-[11px]">
        <span className="w-[160px] pt-[3px] text-[19px] font-semibold tracking-[-0.3px]">Data</span>
        <Dots />
        <div className="ml-[10px]"><DblChevron flip /></div>
      </div>
      <div className="mt-[10px] ml-[5px] flex h-[33px] w-[215px] items-center rounded-[2px] border border-[#8a8886] bg-[#f3f2f1] pl-[9px]">
        <Magnifier s={18} c="#605e5c" />
        <span className="ml-[8px] pt-[2px] text-[17px] text-[#484644]">Search</span>
      </div>
      <div className="mt-[11px]">
        {tables.map((t) => (
          <div key={t} className="flex h-[30px] items-center pl-[12px]">
            <Svg w={8} h={14}><path d="M.5.5L7.500 7 .5 13.500" stroke="#484644" strokeWidth="1.200" /></Svg>
            <Svg w={16} h={16} className="ml-[8px]"><path d="M3 1h10q2 0 2 2v10q0 2-2 2H3q-2 0-2-2V3q0-2 2-2zM1 5.300h14M1 10.300h14M5.300 1v14M10.300 1v14" stroke="#3b3a39" strokeWidth="1.400" /></Svg>
            <span className="ml-[7px] pt-px text-[14.500px] tracking-[0px] whitespace-nowrap text-[#484644]">{t}</span>
          </div>
        ))}
      </div>
    </aside>
  );
}

function RightRail() {
  return (
    <aside className="relative flex w-[40px] shrink-0 flex-col items-center bg-[#faf9f8]">
      <div className="flex h-[40px] w-full items-center justify-center border border-[#605e5c] bg-[#e1dfdd]">
        <Svg w={18} h={22}>
          <path d="M1 4v14c0 2 4 3 8 3s8-1 8-3V4" fill="#fff" stroke="#323130" strokeWidth="1.500" /><ellipse cx="9" cy="4" rx="8" ry="3" fill="#fff" stroke="#323130" strokeWidth="1.500" />
        </Svg>
      </div>
      <div className="flex h-[40px] w-full items-center justify-center border border-[#605e5c] bg-[#e1dfdd]">
        <Svg w={22} h={24}>
          <path d="M1 10h5v12H1zM6 1h6v21H6zM12 7h6v15h-6z" fill="#fff" stroke="#323130" strokeWidth="1.500" />
          <path d="M11 12v9c0 3 10 3 10 0v-9z" fill="#fff" stroke="#e07a10" strokeWidth="1.500" /><ellipse cx="16" cy="12" rx="5" ry="2" fill="#fff" stroke="#e07a10" strokeWidth="1.500" />
        </Svg>
      </div>
      <Svg w={22} h={24} className="mt-[9px]">
        <path d="M1 21V10h5v9M6 14V1h6v13M12 7h6v3" stroke="#484644" strokeWidth="1.500" />
        <path d="M20 8l2 2-8 9-3-3z" fill="#fff" stroke="#323130" strokeWidth="1.300" /><path d="M4 22c3 0 3-5 7-5l3 2c0 4-6 5-10 3z" fill={LB} stroke={BL} strokeWidth="1.300" />
      </Svg>
      <Svg w={22} h={24} className="mt-[16px]">
        <path d="M10 22H1V1h17v9" stroke="#484644" strokeWidth="1.500" /><path d="M5 17v-7h4V5h4v7M9 10v8" stroke="#8a8886" strokeWidth="1.300" />
        <circle cx="16" cy="17.500" r="5.500" fill="#fff" stroke={BL} strokeWidth="1.600" /><path d="M16 14v4h3M13 10h6M16 10v2" stroke={BL} strokeWidth="1.500" />
      </Svg>
      <Svg w={22} h={22} className="mt-[15px]"><path d="M11 0v22M0 11h22" stroke="#111" strokeWidth="1.800" /></Svg>
      <div className="absolute top-[240px] left-[8px] flex h-[113px] w-[24px] flex-col items-center rounded-[4px] bg-[#1b1a1d] pt-[4px]">
        <Svg w={14} h={14}><circle cx="7" cy="7" r="6.300" stroke="#e02020" strokeWidth="1.100" /><circle cx="7" cy="7" r="4.700" fill="#f00" /></Svg>
        <div className="mt-[6px] font-['Noto_Sans'] text-[18.500px] leading-[22px] font-medium tracking-[-0.1px] whitespace-nowrap text-white [writing-mode:vertical-rl]">screenrec</div>
      </div>
      <div className="mt-auto flex h-[40px] w-full items-center justify-center border-t border-[#e1dfdd]">
        <Svg w={26} h={26} vb="0 0 24 24">
          <path d="M8 2.500 12 4.300 16 2.500 18 3.700 18.500 8 22.200 10.700v2.600L18.500 16 18 20.300 16 21.500 12 19.700 8 21.500 6 20.300 5.500 16 1.800 13.300v-2.600L5.500 8 6 3.700z" stroke="#323130" strokeWidth="1.400" strokeLinejoin="round" />
          <circle cx="12" cy="12" r="3.800" stroke="#323130" strokeWidth="1.400" />
        </Svg>
      </div>
    </aside>
  );
}

function PageTabs() {
  return (
    <div className="flex h-[45px] border-b border-[#e1dfdd] bg-[#f3f2f1] text-[14.500px] text-[#252423]">
      <div className="flex w-[160px] border-r border-[#a19f9d]">
        <div className="flex w-[54px] flex-col items-center pt-[9px]">
          <Svg w={24} h={18}><path d="M1 1h22v12H1zM12 13v4M7 17h10" stroke="#605e5c" strokeWidth="1.600" /></Svg>
          <div className="mt-[8px] h-[4px] w-[30px] rounded-full bg-[#117865]" />
        </div>
        <Svg w={17} h={26} className="mt-[6px] ml-[20px]"><rect x="1" y="1" width="15" height="24" rx="1.500" stroke="#605e5c" strokeWidth="1.700" /><path d="M7 21h3" stroke="#605e5c" strokeWidth="1.800" /></Svg>
        <Svg w={6} h={10} className="mt-[16px] ml-[26px]"><path d="M6 0v10L0 5z" fill="#c8c6c4" /></Svg>
        <Svg w={6} h={10} className="mt-[16px] ml-[22px]"><path d="M0 0v10l6-5z" fill="#c8c6c4" /></Svg>
      </div>
      <div className="flex w-[95px] items-center justify-center border-r border-[#c8c6c4] bg-white">Page 1</div>
      <div className="flex w-[96px] items-center justify-center border-r border-[#c8c6c4] bg-white">Page 2</div>
      <div className="flex w-[95px] items-center justify-center border-r border-[#c8c6c4] bg-white">Page 3</div>
      <div className="relative flex w-[97px] items-center justify-center border-r border-[#c8c6c4] bg-white font-semibold shadow-[inset_0_-5px_0_#117865]">
        <span>Page 4</span>
        <span className="absolute top-[2px] right-[5px] text-[13px]">x</span>
      </div>
      <div className="flex w-[96px] items-center justify-center border-r border-[#c8c6c4] bg-white">Page 5</div>
      <div className="mt-[2px] flex h-[40px] w-[48px] items-center justify-center bg-[#117865]">
        <Svg w={14} h={14}><path d="M7 0v14M0 7h14" stroke="#fff" strokeWidth="3.600" /></Svg>
      </div>
    </div>
  );
}

function StatusBar() {
  return (
    <footer className="flex h-[28px] shrink-0 items-center border-b border-black bg-[#f3f2f1] pt-[3px] text-[15px] text-[#484644]">
      <span className="w-[1415px] pl-[5px] tracking-[-0.3px]">Page 4 of 5</span>
      <span className="w-[12px] pb-[4px] text-[18px] leading-none">-</span>
      <Svg w={125} h={14} className="mb-[4px]">
        <path d="M0 7h125M62.500 3.500v7" stroke="#484644" strokeWidth="1.200" /><rect x="47" y="0" width="5" height="14" fill="#484644" />
      </Svg>
      <Svg w={11} h={11} className="mb-[4px] ml-[6px]"><path d="M5.500 0v11M0 5.500h11" stroke="#484644" strokeWidth="1.600" /></Svg>
      <span className="mb-[3px] ml-[16px] w-[52px] text-[14.500px]">82%</span>
      <Svg w={21} h={16} className="mb-[1px]"><rect x=".8" y=".8" width="19.400" height="14.400" stroke="#605e5c" strokeWidth="1.600" /><path d="M7 4H4v3M14 4h3v3M7 12H4V9M14 12h3V9" stroke="#4a7fb0" strokeWidth="1.300" /></Svg>
      <span className="ml-[17px] text-[15px] tracking-[-0.280px] whitespace-nowrap">Update available (click to download)</span>
    </footer>
  );
}

const Chrome = () => (
  <g>
    <circle cx="15" cy="15" r="15" fill="#fbbc04" />
    <path d="M15 0a15 15 0 0 1 13 7.500H15a7.500 7.500 0 0 0-6.500 11.200L2 7.500A15 15 0 0 1 15 0z" fill="#ea4335" />
    <path d="M2 7.500l6.500 11.200A7.500 7.500 0 0 0 17 22l-4 7.900A15 15 0 0 1 2 7.500z" fill="#34a853" />
    <circle cx="15" cy="15" r="7.500" fill="#fff" /><circle cx="15" cy="15" r="5.800" fill="#4285f4" />
  </g>
);
const Teams = () => (
  <g>
    <circle cx="15.500" cy="6" r="3.700" fill="#7b83eb" /><circle cx="24" cy="7" r="2.600" fill="#5059c9" />
    <path d="M19 11.500h8.500v8a4.500 4.500 0 0 1-8.500 2z" fill="#5059c9" /><path d="M10 11.500h12v11a6.500 6.500 0 0 1-12 2z" fill="#7b83eb" />
    <rect x="1" y="7.500" width="15" height="14.500" rx="1.500" fill="#4b53bc" />
    <path d="M5 11.300h7M8.500 11v8" stroke="#fff" strokeWidth="2" />
  </g>
);

const apps: { key: string; art: React.ReactNode; dot?: boolean }[] = [
  { key: "chrome", art: <Chrome /> },
  { key: "copilot", art: (<g>
    <path d="M8 2h11q3 0 4 3l1 3.500h-4.500q-3 0-4 3.500l-2 7q-1 2-3.500 2H3q-3.500 0-2.700-4L4 6q1-4 4-4z" fill="url(#cpA)" />
    <path d="M14 2h5q3 0 4 3l1 3.500h-5Q16 8 14 2z" fill="#1a4fc4" />
    <path d="M22 28H11q-3 0-4-3l-1-4h4.500q2.500 0 3.500-3l2.200-7q1-2.500 4-2.500h6.500q4 0 3 4L26 24q-1 4-4 4z" fill="url(#cpB)" />
    <path d="M16 28h-5q-3 0-4-3l-1-4h5q3 0 5 7z" fill="#f4723c" />
    <path d="M15.300 12.500l.8-2.500h3.700l-3 9.300q-.8 2-2.500 1.700h-2.500q1.500-1 2-3z" fill="#1e2b33" />
  </g>) },
  { key: "teamsnew", art: (<g><Teams /><rect x="8" y="20" width="21" height="9.500" rx="1" fill="#3be0e6" /><text x="18.300" y="27.800" fontSize="8.500" fontWeight="800" fontFamily="Open Sans, sans-serif" letterSpacing="-0.2" textAnchor="middle" fill="#111">NEW</text></g>) },
  { key: "edge", art: (<g>
    <path d="M1 14C2 5 8 0 15 0c9 0 15 6 15 12 0 5-4 8-8 8-4 0-5-1-4-3 2-4-1-8-6-8-6 0-10 3-11 5z" fill="url(#edA)" />
    <path d="M1 14c2-4 6-6 11-5 3 0 6 3 6 5-3-2-7 1-6 6 1 6 6 8 13 6-3 3-6 4-10 4C6 30 0 23 1 14z" fill="#1479c9" />
    <path d="M12 16c-1 5 2 9 8 9 3 0 6-1 8-2-3 5-8 7-13 7-4 0-6-6-3-14z" fill="#0c4f96" />
    <circle cx="8" cy="22.500" r="7" fill="#c8c6c4" /><circle cx="8" cy="20.300" r="2.600" fill="#605e5c" /><path d="M3 27.500q1-4 5-4t5 4q-5 3-10 0z" fill="#605e5c" />
  </g>) },
  { key: "firefox", art: (<g>
    <path d="M15 5Q16 1 19 0c0 4 5 6 6 9l1-3c2 3 3 7 3 11 0 7-6 12-14 12S1 24 1 17c0-5 2-9 4-11l2 4c2-2 5-4 8-5z" fill="url(#ffA)" />
    <circle cx="15" cy="16" r="6.500" fill="#6d3fd4" /><path d="M5 10c3-1 5 0 6 1 2 0 4 0 5 1-1 2-4 2-4 4 1 3 6 2 8-1 1 5-2 9-6 9-6 0-10-7-9-14z" fill="#ff7a25" opacity=".85" />
  </g>) },
  { key: "explorer", dot: true, art: (<g>
    <path d="M0 4q0-2 2-2h8l3 3h15q2 0 2 2v4H0z" fill="#e59f0c" /><path d="M0 9h30v16q0 2-2 2H2q-2 0-2-2z" fill="url(#exA)" />
    <path d="M5 22.500q0-2 2-2h16q2 0 2 2V28H5z" fill="#1683d8" /><path d="M9 24h12" stroke="#0b5a9c" strokeWidth="1.500" />
  </g>) },
  { key: "teams", art: <g transform="translate(0 1)"><Teams /></g> },
  { key: "zoom", art: (<g><rect width="30" height="30" rx="12.500" fill="#0b5cff" /><text x="15" y="18" fontSize="9.500" fontWeight="700" fontFamily="Open Sans, sans-serif" letterSpacing="-0.4" textAnchor="middle" fill="#fff">zoom</text></g>) },
  { key: "chromeh", dot: true, art: (<g><Chrome /><circle cx="25.500" cy="5" r="10" fill="#138a99" /><text x="25.500" y="9.300" fontSize="12" fontFamily="Open Sans, sans-serif" textAnchor="middle" fill="#d5f2f4">H</text></g>) },
  { key: "photos", dot: true, art: (<g><rect x="2" y="2" width="26" height="26" rx="3" fill="url(#phA)" /><path d="M2 25l11-13q2-2 4 0l11 13q0 3-3 3H5q-3 0-3-3z" fill="#50b4f2" /><path d="M8 28l7-8 8 8z" fill="#d8efff" opacity=".8" /><circle cx="22" cy="7" r="2.300" fill="#fff" /></g>) },
];

function Taskbar() {
  return (
    <div className="flex h-[61px] shrink-0 items-center border-t border-[#45494b] bg-[linear-gradient(90deg,#242a2a_0%,#23292c_22%,#1b2836_32%,#1f2a36_45%,#1c2c36_56%,#1c2d37_72%,#222a2f_82%,#25272a_100%)] text-[14.500px] text-white">
      <div className="flex w-[502px] items-center pl-[28px]">
        <Svg w={23} h={28}>
          <rect width="23" height="28" rx="2" fill="url(#wdA)" /><path d="M3 14h4v11H3zM9.500 19h4v6h-4zM16 16h4v9h-4z" fill="#0a5fb4" />
          <circle cx="20.500" cy="2.500" r="9.700" fill="#ff99a4" />
          <text x="20.500" y="7.500" fontSize="14" fontFamily="Open Sans, sans-serif" textAnchor="middle" fill="#3b1d20">1</text>
        </Svg>
        <div className="ml-[13px] flex flex-col leading-[20px] tracking-[-0.1px]"><span>Upcoming</span><span className="text-[#b9bcbe]">Earnings</span></div>
      </div>
      <Svg w={30} h={30}><path d="M0 0h14.300v14.300H0zM15.700 0H30v14.300H15.700zM0 15.700h14.300V30H0zM15.700 15.700H30V30H15.700z" fill="url(#wnA)" /></Svg>
      <div className="ml-[16px] flex h-[40px] w-[274px] items-center rounded-full border border-[#4d545b] bg-[#3a434c] pl-[14px]">
        <Svg w={19} h={19}><circle cx="8" cy="8" r="6.800" stroke="#e5e7e9" strokeWidth="2.200" fill="#59616a" /><path d="M13 13l5 5" stroke="#e5e7e9" strokeWidth="2.400" /></Svg>
        <span className="ml-[12px] w-[163px] text-[16.500px] tracking-[-0.3px] text-[#d2d5d8]">Search</span>
        <Svg w={58} h={32}>
          <path d="M1 25q13-7 28-7t28 7q-12 6-28 6T1 25z" fill="#e8c49a" /><path d="M1 25q28 7 56 0-10 7-28 7T1 25z" fill="#c9a273" />
          <path d="M8 9l9-1 7-3 5 17-9 2-9 4z" fill="#f6f4f0" /><path d="M11 28l9-4 9-2v2l-9 2.500-9 3.500z" fill="#5da03c" />
          <path d="M17 8l4 15M10 12l5-1M11 15l5-1M12 19l5-1M19 10l5-2M20 14l5-2M22 18l5-1" stroke="#9a9a98" strokeWidth=".9" />
          <path d="M28 4l3 2-6 9-3 2 0-4z" fill="#f5b04a" /><path d="M28 4l1.500-2 3 2L31 6z" fill="#e8584a" />
          <path d="M37 12q0-9 8-9t8 9v14q-8 3-16 0z" fill="#1c86f5" /><path d="M39 21q0-4 6-4t6 4v4q-6 2-12 0z" fill="#6a78ec" /><path d="M37 14q8 4 16 0" stroke="#0b5bc4" strokeWidth="1.500" /><path d="M42 3q0-2 3-2t3 2" stroke="#1c86f5" strokeWidth="1.500" />
        </Svg>
      </div>
      <div className="ml-[4px] flex">
        {apps.map((a) => (
          <div key={a.key} className="flex h-[61px] w-[55px] flex-col items-center pt-[15px]">
            <Svg w={30} h={30}>{a.art}</Svg>
            {a.dot && <div className="mt-[5px] h-[4px] w-[8px] rounded-full bg-[#9a9fa3]" />}
          </div>
        ))}
      </div>
      <div className="ml-px flex h-[50px] w-[49px] flex-col items-center rounded-[5px] border border-[#3a464c] bg-[#2d393e] pt-[9px]">
        <Svg w={24} h={30}><path d="M12 0h11q1 0 1 1v29H12z" fill="#d9960c" /><path d="M6 8q0-1 1-1h10q1 0 1 1v22H6z" fill="#ebb51a" /><path d="M0 16q0-1 1-1h10q1 0 1 1v14H1q-1 0-1-1z" fill="#f8dc5f" /></Svg>
        <div className="mt-[5px] h-[4px] w-[20px] shrink-0 rounded-full bg-[#4cc2ff]" />
      </div>
      <Svg w={14} h={8} className="mr-[23px] ml-[167px]"><path d="M1 7l6-5.500L13 7" stroke="#fff" strokeWidth="1.800" /></Svg>
      <div className="flex w-[36px] flex-col items-center leading-[20px]"><span className="-mr-[4px]">ENG</span><span className="-mr-[4px]">IN</span></div>
      <Svg w={20} h={16} className="ml-[21px]">
        <path d="M1 6q9-8.500 18 0" stroke="#666a6d" strokeWidth="1.500" /><path d="M4 9q6-6 12 0M6.500 12q3.500-3.500 7 0" stroke="#fff" strokeWidth="1.800" /><circle cx="10" cy="14" r="1.900" fill="#fff" />
      </Svg>
      <Svg w={21} h={18} className="ml-[9px]"><path d="M1 6h3.500L9 1.500v15L4.500 12H1z" stroke="#fff" strokeWidth="1.500" /><path d="M12 6q2 3 0 6M15 4q3.500 5 0 10M17.500 1.500q5 7.500 0 15" stroke="#fff" strokeWidth="1.500" /></Svg>
      <Svg w={20} h={16} className="ml-[9px]"><rect x="1" y="3" width="16" height="12" rx="3" stroke="#fff" strokeWidth="1.600" /><path d="M5 6h9v6.500H4zM18 7h1.800v4H18z" fill="#fff" /><path d="M4-1L0 6h3l-1 5 6-8H5l1-4z" fill="#fff" stroke="#25282b" strokeWidth="1" /></Svg>
      <div className="ml-[17px] flex w-[83px] flex-col items-end leading-[20px] tracking-[0px] whitespace-nowrap"><span className="tracking-[-0.2px]">07:56 PM</span><span>12-08-2024</span></div>
      <Svg w={17} h={19} className="ml-[10px]"><path d="M8.500 0q6 0 6 7v4l2.500 4H0l2.500-4V7q0-7 6-7zM5.500 16h6q-1 3-3 3t-3-3z" fill="#93e4fb" /></Svg>
    </div>
  );
}

const G = ({ id, a, b, c }: { id: string; a: string; b: string; c?: string }) => (
  <linearGradient id={id} x1=".3" y1="0" x2=".7" y2="1"><stop offset="0" stopColor={a} />{c && <stop offset=".5" stopColor={c} />}<stop offset="1" stopColor={b} /></linearGradient>
);

export default function App() {
  return (
    <div className="flex h-[1080px] w-[1920px] flex-col overflow-hidden bg-[#fafafa] font-['Open_Sans','Noto_Sans',sans-serif] tracking-[-0.4px]">
      <svg width="0" height="0" className="absolute">
        <defs>
          <G id="cpA" a="#1f8fe8" c="#3fb6a0" b="#f0cf2a" />
          <G id="cpB" a="#b45be6" c="#ee5aa0" b="#f9a03c" />
          <linearGradient id="edA"><stop offset="0" stopColor="#1f9be0" /><stop offset=".5" stopColor="#2cc3c9" /><stop offset="1" stopColor="#6fdc4f" /></linearGradient>
          <linearGradient id="ffA" x1=".8" y1="0" x2=".3" y2="1"><stop offset="0" stopColor="#ffe23b" /><stop offset=".5" stopColor="#ff9a1f" /><stop offset="1" stopColor="#f5305a" /></linearGradient>
          <G id="exA" a="#ffe08a" b="#f5b81c" />
          <G id="phA" a="#1e8be0" b="#2a4fb8" />
          <G id="wdA" a="#6cc8fa" b="#1fa0ee" />
          <G id="wnA" a="#7ce8fa" c="#45c2fb" b="#1a9bfa" />
        </defs>
      </svg>
      <TitleBar />
      <MenuTabs />
      <Ribbon />
      <div className="flex h-[790px] shrink-0">
        <LeftRail />
        <div className="flex flex-col">
          <div className="flex h-[745px] shrink-0"><Canvas /><FiltersPane /></div>
          <PageTabs />
        </div>
        <BuildPane />
        <DataPane />
        <RightRail />
      </div>
      <StatusBar />
      <Taskbar />
    </div>
  );
}
